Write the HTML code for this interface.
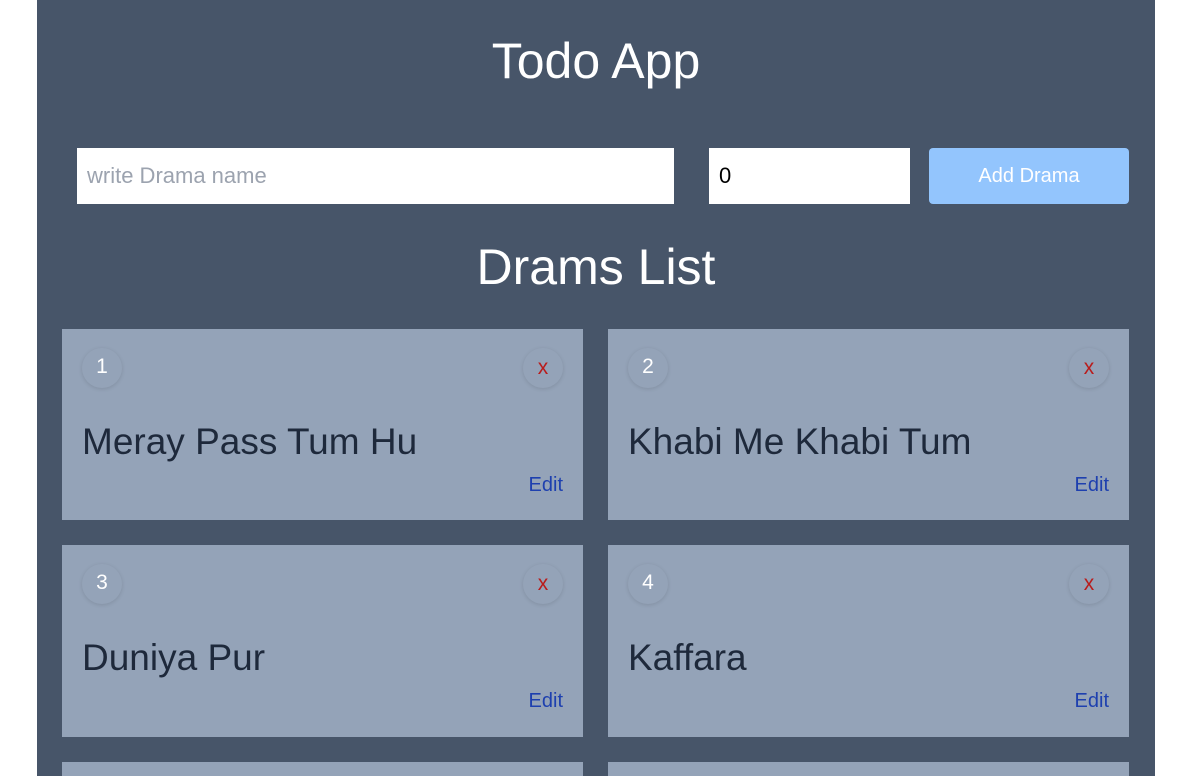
<!DOCTYPE html>
<html style="overflow:hidden;height:776px"><head><style>
*{box-sizing:border-box;margin:0;padding:0}
body{width:1182px;height:776px;overflow:hidden;background:#fff;font-family:"Liberation Sans",sans-serif;position:relative}
.c{position:absolute;left:37px;top:0;width:1118px;height:776px;background:#475569;overflow:hidden}
h1{position:absolute;left:0;width:100%;text-align:center;color:#fff;font-weight:normal;font-size:50px}
.in{position:absolute;top:148px;height:56px;background:#fff;font-size:22px;padding-left:10px;line-height:56px}
.btn{position:absolute;top:148px;left:892px;width:200px;height:56px;background:#93c5fd;border-radius:4px;color:#fff;font-size:20px;text-align:center;line-height:56px}
.card{position:absolute;width:521px;height:191px;background:#94a3b8}
.n,.x{position:absolute;top:19px;width:40px;height:40px;border-radius:50%;box-shadow:0 1px 4px rgba(0,0,0,.12);text-align:center;line-height:38px;font-size:21px}
.n{left:20px;color:#fff}
.x{right:20px;color:#b91c1c;line-height:40px}
.t{position:absolute;left:20px;top:92px;font-size:37px;color:#1e293b}
.e{position:absolute;right:20px;top:145px;font-size:20px;color:#1e40af}
</style></head><body>
<div class="c">
<h1 style="top:32px">Todo App</h1>
<div class="in" style="left:40px;width:597px;color:#9ca3af">write Drama name</div>
<div class="in" style="left:672px;width:201px;color:#000">0</div>
<div class="btn">Add Drama</div>
<h1 style="top:238px">Drams List</h1>
<div class="card" style="left:25px;top:329px"><div class="n">1</div><div class="x">x</div><div class="t">Meray Pass Tum Hu</div><div class="e">Edit</div></div>
<div class="card" style="left:571px;top:329px"><div class="n">2</div><div class="x">x</div><div class="t">Khabi Me Khabi Tum</div><div class="e">Edit</div></div>
<div class="card" style="left:25px;top:545px;height:192px"><div class="n">3</div><div class="x">x</div><div class="t">Duniya Pur</div><div class="e">Edit</div></div>
<div class="card" style="left:571px;top:545px;height:192px"><div class="n">4</div><div class="x">x</div><div class="t">Kaffara</div><div class="e">Edit</div></div>
<div class="card" style="left:25px;top:762px;height:14px"></div>
<div class="card" style="left:571px;top:762px;height:14px"></div>
</div>
</body></html>
